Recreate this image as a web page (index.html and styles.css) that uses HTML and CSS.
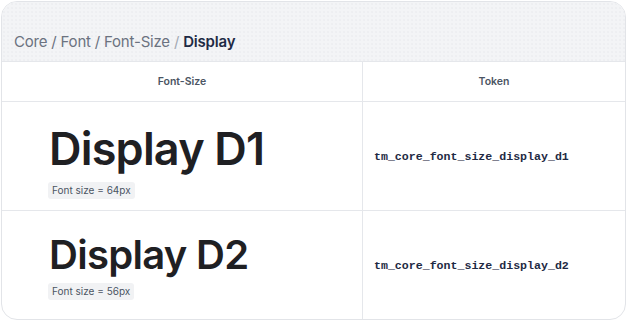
FILE: index.html
```html
<!DOCTYPE html>
<html>
<head>
<meta charset="utf-8">
<link rel="stylesheet" href="styles.css">
</head>
<body>
<div class="card">
  <div class="crumbs">
    <span class="crumb">Core / Font / Font-Size</span>&nbsp;<span class="sep">/</span>&nbsp;<span class="current">Display</span>
  </div>
  <div class="table">
    <div class="th">Font-Size</div>
    <div class="th th-r">Token</div>
    <div class="cell sample">
      <div class="d1">Display D1</div>
      <span class="tag">Font size = 64px</span>
    </div>
    <div class="cell token">tm_core_font_size_display_d1</div>
    <div class="cell sample s2 last">
      <div class="d2">Display D2</div>
      <span class="tag">Font size = 56px</span>
    </div>
    <div class="cell token last">tm_core_font_size_display_d2</div>
  </div>
</div>
</body>
</html>
```
FILE: styles.css
```css
* { box-sizing: border-box; }
html, body { margin: 0; padding: 0; background: #fff; }
body { padding: 1px; font-family: Inter, "Noto Sans", sans-serif; }
.card {
  width: 625px;
  height: 319px;
  border: 1px solid #e2e4e8;
  border-radius: 16px;
  overflow: hidden;
  display: flex;
  flex-direction: column;
}
.crumbs {
  height: 60px;
  background-color: #f3f4f6;
  background-image: radial-gradient(#e6e8ec 0.6px, transparent 0.8px);
  background-size: 4px 4px;
  border-bottom: 1px solid #e5e7eb;
  display: flex;
  align-items: center;
  padding: 19px 12px 0;
  font-size: 15px;
  letter-spacing: -0.2px;
  color: #6b7280;
  white-space: pre;
}
.sep { color: #a3a9b3; }
.current { color: #1e2a44; font-weight: 600; }
.table {
  flex: 1;
  display: grid;
  grid-template-columns: 360px 1fr;
  grid-template-rows: 40px 109px 1fr;
}
.th {
  display: flex;
  align-items: center;
  justify-content: center;
  font-size: 10.5px;
  font-weight: 600;
  color: #4b5563;
  border-bottom: 1px solid #e5e7eb;
}
.th-r, .token { border-left: 1px solid #e5e7eb; }
.cell { border-bottom: 1px solid #e5e7eb; }
.cell.last { border-bottom: none; }
.sample {
  padding: 23px 0 0 46px;
  display: flex;
  flex-direction: column;
  align-items: flex-start;
}
.d1, .d2 {
  font-family: Inter, sans-serif;
  font-weight: 600;
  color: #1f2023;
  margin-left: 1px;
}
.d1 { font-size: 45px; line-height: 48px; letter-spacing: -0.8px; margin-bottom: 9px; }
.d2 { font-size: 40px; line-height: 42px; letter-spacing: -0.7px; margin-bottom: 7px; }
.tag {
  background: #f1f2f4;
  border-radius: 3px;
  padding: 2px 4px;
  line-height: 13px;
  font-size: 10px;
  color: #4b5563;
}
.token {
  display: flex;
  align-items: center;
  padding-left: 11px;
  font-family: "Liberation Mono", "DejaVu Sans Mono", monospace;
  font-weight: 700;
  font-size: 11.6px;
  color: #1e2a44;
}
```
